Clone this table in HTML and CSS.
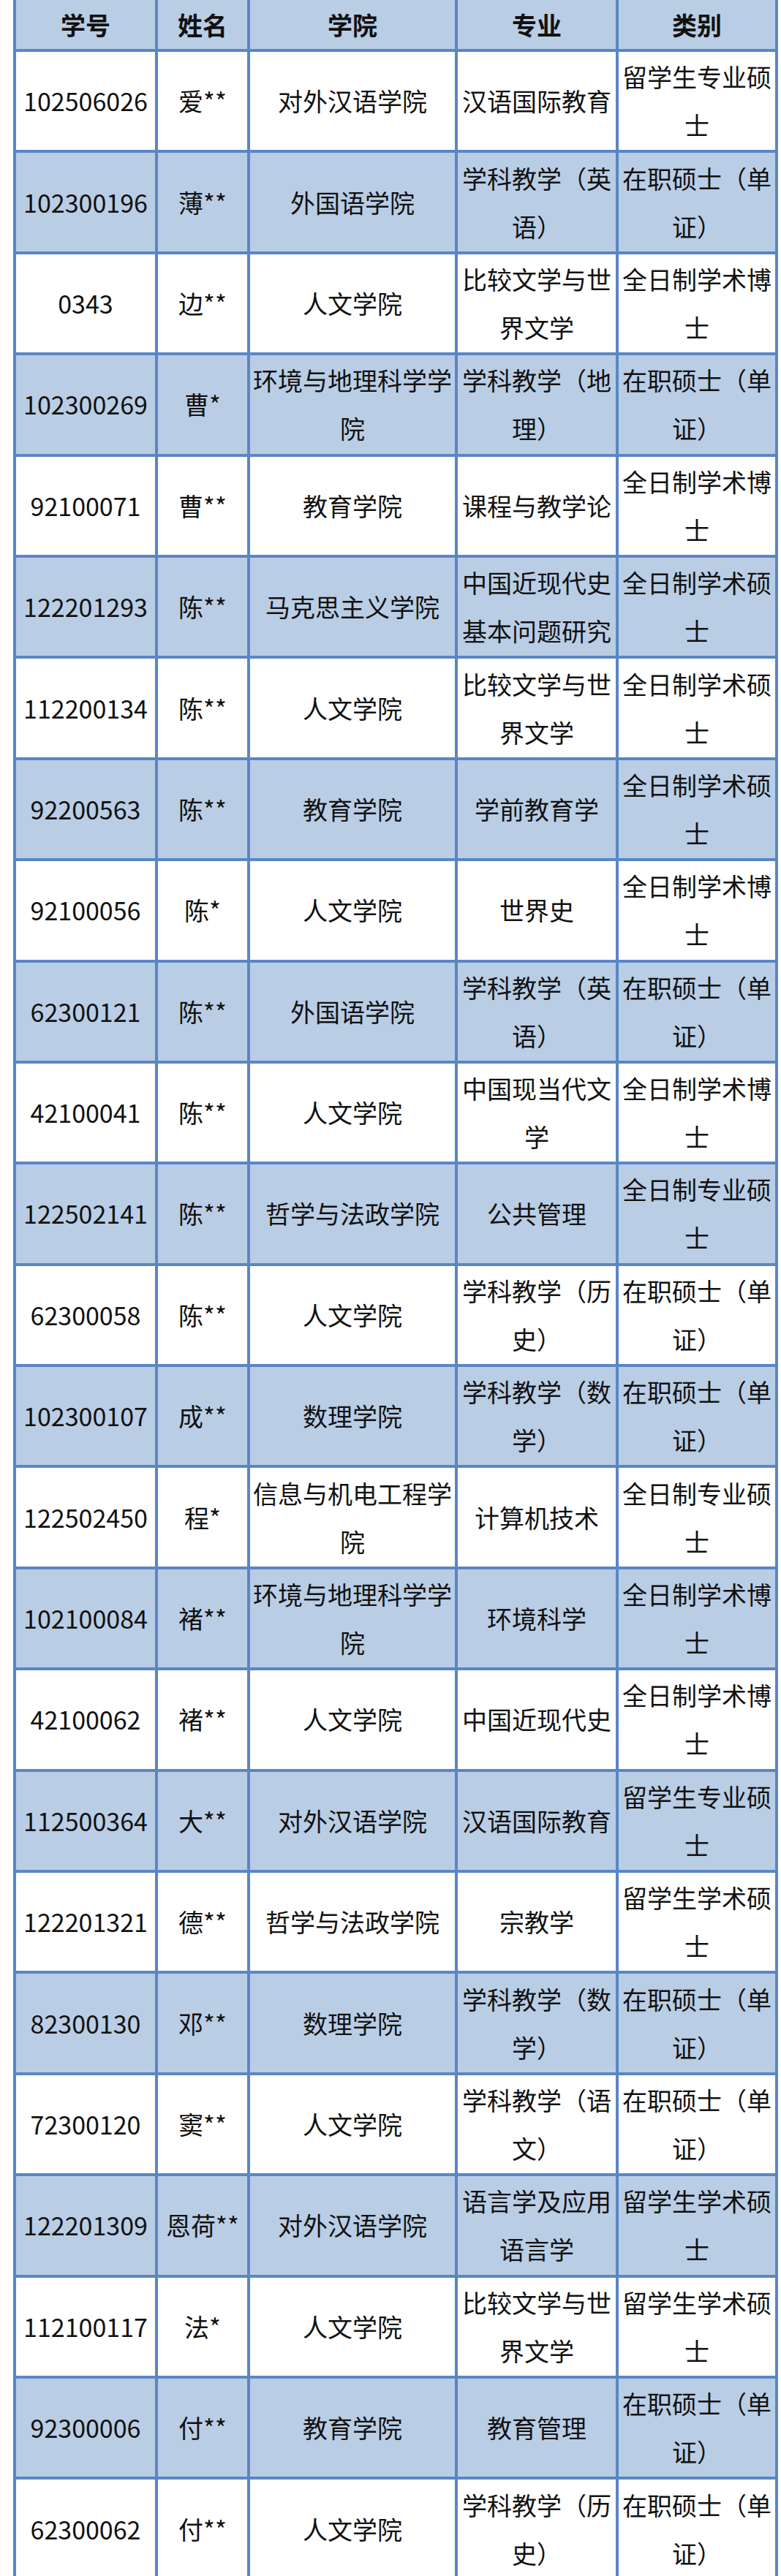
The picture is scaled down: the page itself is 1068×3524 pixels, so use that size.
FILE: index.html
```html
<!DOCTYPE html>
<html lang="zh-CN">
<head>
<meta charset="utf-8">
<title>名单</title>
<link rel="stylesheet" href="styles.css">
</head>
<body>
<div class="sheet" role="table">
  <div class="row head" role="row"><div class="cell" role="columnheader">学号</div><div class="cell" role="columnheader">姓名</div><div class="cell" role="columnheader">学院</div><div class="cell" role="columnheader">专业</div><div class="cell" role="columnheader">类别</div></div>
  <div class="row" role="row"><div class="cell">102506026</div><div class="cell">爱**</div><div class="cell">对外汉语学院</div><div class="cell">汉语国际教育</div><div class="cell">留学生专业硕士</div></div>
  <div class="row alt" role="row"><div class="cell">102300196</div><div class="cell">薄**</div><div class="cell">外国语学院</div><div class="cell">学科教学（英语）</div><div class="cell">在职硕士（单证）</div></div>
  <div class="row" role="row"><div class="cell">0343</div><div class="cell">边**</div><div class="cell">人文学院</div><div class="cell">比较文学与世界文学</div><div class="cell">全日制学术博士</div></div>
  <div class="row alt" role="row"><div class="cell">102300269</div><div class="cell">曹*</div><div class="cell">环境与地理科学学院</div><div class="cell">学科教学（地理）</div><div class="cell">在职硕士（单证）</div></div>
  <div class="row" role="row"><div class="cell">92100071</div><div class="cell">曹**</div><div class="cell">教育学院</div><div class="cell">课程与教学论</div><div class="cell">全日制学术博士</div></div>
  <div class="row alt" role="row"><div class="cell">122201293</div><div class="cell">陈**</div><div class="cell">马克思主义学院</div><div class="cell">中国近现代史基本问题研究</div><div class="cell">全日制学术硕士</div></div>
  <div class="row" role="row"><div class="cell">112200134</div><div class="cell">陈**</div><div class="cell">人文学院</div><div class="cell">比较文学与世界文学</div><div class="cell">全日制学术硕士</div></div>
  <div class="row alt" role="row"><div class="cell">92200563</div><div class="cell">陈**</div><div class="cell">教育学院</div><div class="cell">学前教育学</div><div class="cell">全日制学术硕士</div></div>
  <div class="row" role="row"><div class="cell">92100056</div><div class="cell">陈*</div><div class="cell">人文学院</div><div class="cell">世界史</div><div class="cell">全日制学术博士</div></div>
  <div class="row alt" role="row"><div class="cell">62300121</div><div class="cell">陈**</div><div class="cell">外国语学院</div><div class="cell">学科教学（英语）</div><div class="cell">在职硕士（单证）</div></div>
  <div class="row" role="row"><div class="cell">42100041</div><div class="cell">陈**</div><div class="cell">人文学院</div><div class="cell">中国现当代文学</div><div class="cell">全日制学术博士</div></div>
  <div class="row alt" role="row"><div class="cell">122502141</div><div class="cell">陈**</div><div class="cell">哲学与法政学院</div><div class="cell">公共管理</div><div class="cell">全日制专业硕士</div></div>
  <div class="row" role="row"><div class="cell">62300058</div><div class="cell">陈**</div><div class="cell">人文学院</div><div class="cell">学科教学（历史）</div><div class="cell">在职硕士（单证）</div></div>
  <div class="row alt" role="row"><div class="cell">102300107</div><div class="cell">成**</div><div class="cell">数理学院</div><div class="cell">学科教学（数学）</div><div class="cell">在职硕士（单证）</div></div>
  <div class="row" role="row"><div class="cell">122502450</div><div class="cell">程*</div><div class="cell">信息与机电工程学院</div><div class="cell">计算机技术</div><div class="cell">全日制专业硕士</div></div>
  <div class="row alt" role="row"><div class="cell">102100084</div><div class="cell">褚**</div><div class="cell">环境与地理科学学院</div><div class="cell">环境科学</div><div class="cell">全日制学术博士</div></div>
  <div class="row" role="row"><div class="cell">42100062</div><div class="cell">褚**</div><div class="cell">人文学院</div><div class="cell">中国近现代史</div><div class="cell">全日制学术博士</div></div>
  <div class="row alt" role="row"><div class="cell">112500364</div><div class="cell">大**</div><div class="cell">对外汉语学院</div><div class="cell">汉语国际教育</div><div class="cell">留学生专业硕士</div></div>
  <div class="row" role="row"><div class="cell">122201321</div><div class="cell">德**</div><div class="cell">哲学与法政学院</div><div class="cell">宗教学</div><div class="cell">留学生学术硕士</div></div>
  <div class="row alt" role="row"><div class="cell">82300130</div><div class="cell">邓**</div><div class="cell">数理学院</div><div class="cell">学科教学（数学）</div><div class="cell">在职硕士（单证）</div></div>
  <div class="row" role="row"><div class="cell">72300120</div><div class="cell">窦**</div><div class="cell">人文学院</div><div class="cell">学科教学（语文）</div><div class="cell">在职硕士（单证）</div></div>
  <div class="row alt" role="row"><div class="cell">122201309</div><div class="cell">恩荷**</div><div class="cell">对外汉语学院</div><div class="cell">语言学及应用语言学</div><div class="cell">留学生学术硕士</div></div>
  <div class="row" role="row"><div class="cell">112100117</div><div class="cell">法*</div><div class="cell">人文学院</div><div class="cell">比较文学与世界文学</div><div class="cell">留学生学术硕士</div></div>
  <div class="row alt" role="row"><div class="cell">92300006</div><div class="cell">付**</div><div class="cell">教育学院</div><div class="cell">教育管理</div><div class="cell">在职硕士（单证）</div></div>
  <div class="row" role="row"><div class="cell">62300062</div><div class="cell">付**</div><div class="cell">人文学院</div><div class="cell">学科教学（历史）</div><div class="cell">在职硕士（单证）</div></div>
</div>
</body>
</html>
```
FILE: styles.css
```css
html, body {
  margin: 0;
  padding: 0;
  background: #ffffff;
}

body {
  padding-left: 18px;
  font-family: "Noto Sans CJK SC", "Noto Sans", sans-serif;
  color: #111111;
}

.sheet {
  display: grid;
  grid-template-columns: 190px 122px 280px 216px 214px;
  grid-template-rows: 67px;
  grid-auto-rows: 134.4px;
  gap: 4px;
  padding: 0 4px 4px;
  width: 1046px;
  box-sizing: border-box;
  background: #5a86c4;
}

.row {
  display: contents;
}

.cell {
  display: flex;
  align-items: center;
  justify-content: center;
  text-align: center;
  padding: 0 2px;
  font-size: 34px;
  line-height: 66px;
  background: #ffffff;
  overflow: hidden;
}

.row.alt .cell,
.row.head .cell {
  background: #b9cde5;
}

.row.head .cell {
  font-weight: 700;
  line-height: 40px;
}
```
